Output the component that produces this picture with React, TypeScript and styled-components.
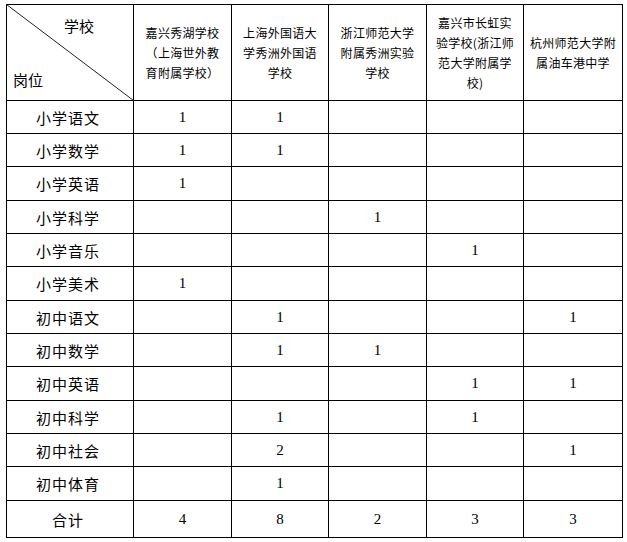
import React from "react";
import styled, { createGlobalStyle } from "styled-components";

const Global = createGlobalStyle`
  html, body { margin: 0; padding: 0; background: #ffffff; }
  body { width: 627px; height: 542px; overflow: hidden; }
`;

const Page = styled.div`
  padding: 4px 0 0 6px;
`;

const Grid = styled.div`
  display: grid;
  grid-template-columns: 126px 97px 96px 97px 96px 98px;
  grid-template-rows: 95px repeat(4, 32px 32px 33px) 36px;
  gap: 1px;
  padding: 1px;
  background: #000000;
  width: max-content;
`;

const Cell = styled.div`
  background: #ffffff;
  display: flex;
  align-items: center;
  justify-content: center;
  color: #000000;
`;

const DiagCell = styled(Cell)`
  position: relative;
  flex-direction: column;
  align-items: stretch;
  justify-content: space-between;
  padding: 13px 0 12px 6px;
  font-family: "Noto Sans CJK SC", sans-serif;
  font-size: 15px;
  line-height: 16px;
`;

const DiagLine = styled.svg`
  position: absolute;
  left: -1px;
  top: -1px;
  width: 128px;
  height: 97px;
  pointer-events: none;
`;

const TopLabel = styled.span`
  align-self: flex-end;
  margin-right: 39px;
`;

const BottomLabel = styled.span`
  align-self: flex-start;
`;

const HeadCell = styled(Cell)`
  text-align: center;
  font-family: "Noto Sans CJK SC", sans-serif;
  font-size: 12px;
  line-height: 20px;
  letter-spacing: 0.3px;
`;

const LabelCell = styled(Cell)`
  font-family: "Noto Sans CJK SC", sans-serif;
  font-size: 15px;
  letter-spacing: 1px;
  padding-right: 4px;
`;

const NumCell = styled(Cell)`
  font-family: "Liberation Serif", "Times New Roman", serif;
  font-size: 15px;
`;

const headers: string[][] = [
  ["嘉兴秀湖学校", "（上海世外教", "育附属学校）"],
  ["上海外国语大", "学秀洲外国语", "学校"],
  ["浙江师范大学", "附属秀洲实验", "学校"],
  ["嘉兴市长虹实", "验学校(浙江师", "范大学附属学", "校)"],
  ["杭州师范大学附", "属油车港中学"],
];

const rows: [string, string[]][] = [
  ["小学语文", ["1", "1", "", "", ""]],
  ["小学数学", ["1", "1", "", "", ""]],
  ["小学英语", ["1", "", "", "", ""]],
  ["小学科学", ["", "", "1", "", ""]],
  ["小学音乐", ["", "", "", "1", ""]],
  ["小学美术", ["1", "", "", "", ""]],
  ["初中语文", ["", "1", "", "", "1"]],
  ["初中数学", ["", "1", "1", "", ""]],
  ["初中英语", ["", "", "", "1", "1"]],
  ["初中科学", ["", "1", "", "1", ""]],
  ["初中社会", ["", "2", "", "", "1"]],
  ["初中体育", ["", "1", "", "", ""]],
  ["合计", ["4", "8", "2", "3", "3"]],
];

export default function App() {
  return (
    <>
      <Global />
      <Page>
        <Grid>
          <DiagCell>
            <DiagLine viewBox="0 0 128 97" preserveAspectRatio="none">
              <line x1="0.5" y1="0.5" x2="127.5" y2="96.5" stroke="#222" strokeWidth="1" />
            </DiagLine>
            <TopLabel>学校</TopLabel>
            <BottomLabel>岗位</BottomLabel>
          </DiagCell>
          {headers.map((lines, i) => (
            <HeadCell key={i}>
              <div>
                {lines.map((l, j) => (
                  <div key={j}>{l}</div>
                ))}
              </div>
            </HeadCell>
          ))}
          {rows.map(([label, vals]) => (
            <React.Fragment key={label}>
              <LabelCell>{label}</LabelCell>
              {vals.map((v, k) => (
                <NumCell key={k}>{v}</NumCell>
              ))}
            </React.Fragment>
          ))}
        </Grid>
      </Page>
    </>
  );
}
